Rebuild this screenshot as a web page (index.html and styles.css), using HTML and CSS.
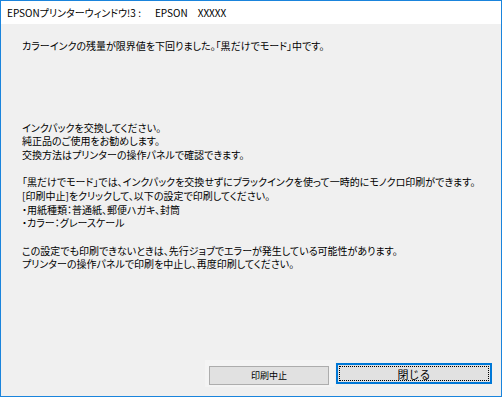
FILE: index.html
```html
<!DOCTYPE html>
<html lang="ja">
<head>
  <meta charset="UTF-8">
  <title>EPSONプリンターウィンドウ!3</title>
  <link rel="stylesheet" href="styles.css">
</head>
<body>
  <div class="window">
    <!-- タイトルバー -->
    <div class="titlebar">
      <span class="app-name">EPSONプリンターウィンドウ!3 :</span>
      <span class="printer-name">EPSON</span>
      <span class="printer-model">XXXXX</span>
    </div>

    <!-- メッセージ -->
    <div class="content">
      <p class="lead">カラーインクの残量が限界値を下回りました。「黒だけでモード」中です。</p>

      <div class="details">
        <p>インクパックを交換してください。<br>
          純正品のご使用をお勧めします。<br>
          交換方法はプリンターの操作パネルで確認できます。</p>
        <p>「黒だけでモード」では、インクパックを交換せずにブラックインクを使って一時的にモノクロ印刷ができます。<br>
          [印刷中止]をクリックして、以下の設定で印刷してください。<br>
          ・用紙種類：普通紙、郵便ハガキ、封筒<br>
          ・カラー：グレースケール</p>
        <p>この設定でも印刷できないときは、先行ジョブでエラーが発生している可能性があります。<br>
          プリンターの操作パネルで印刷を中止し、再度印刷してください。</p>
      </div>
    </div>

    <!-- ボタン -->
    <div class="footer">
      <div class="button-slot">
        <button class="button">印刷中止</button>
      </div>
      <button class="button button-default"><span class="focus-ring">閉じる</span></button>
    </div>
  </div>
</body>
</html>
```

FILE: styles.css
```css
* {
  box-sizing: border-box;
}

body {
  margin: 0;
  padding: 0;
  font-family: "Noto Sans CJK JP", "Noto Sans", sans-serif;
  font-size: 10px;
  color: #000;
  background: #f0f0f0;
}

.window {
  width: 502px;
  height: 397px;
  border: 1px solid #1a84dc;
  display: flex;
  flex-direction: column;
  background: #f0f0f0;
}

.titlebar {
  height: 23px;
  background: #fff;
  display: flex;
  align-items: center;
  padding-left: 6px;
  font-size: 10px;
  font-feature-settings: "palt";
  white-space: nowrap;
}

.printer-name {
  margin-left: 14px;
}

.printer-model {
  margin-left: 10px;
}

.content {
  flex: 1;
  padding: 15px 21px 0;
  line-height: 13.6px;
  font-feature-settings: "palt";
}

.content p {
  margin: 0;
}

.lead {
  margin-bottom: 68px !important;
}

.details p + p {
  margin-top: 14px;
}

.footer {
  display: flex;
  justify-content: flex-end;
  align-items: center;
  padding: 0 9px 9px 0;
}

.button-slot {
  background: #f4f4f4;
  padding: 6px 6px 2px 4px;
  margin-right: 1px;
}

.button {
  height: 19px;
  width: 120px;
  border: 1px solid #adadad;
  background: #e1e1e1;
  font-family: "Noto Sans CJK JP", sans-serif;
  font-size: 9px;
  color: #000;
  padding: 0;
  margin: 0;
}

.button-default {
  width: 156px;
  height: 21px;
  border: 2px solid #0078d7;
  padding: 1px;
  font-size: 11px;
}

.focus-ring {
  display: flex;
  align-items: center;
  justify-content: center;
  height: 100%;
  border: 1px dotted #000;
}
```
